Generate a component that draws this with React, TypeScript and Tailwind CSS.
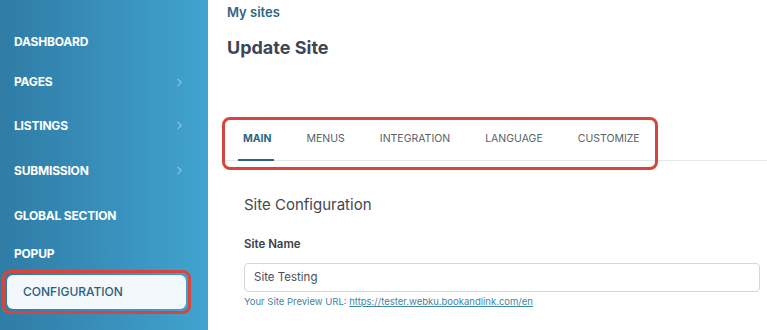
import { ChevronRight } from 'lucide-react'

const nav = [
  { label: 'DASHBOARD', h: 'h-[38px]' },
  { label: 'PAGES', h: 'h-[42px]', more: true },
  { label: 'LISTINGS', h: 'h-[45px]', more: true },
  { label: 'SUBMISSION', h: 'h-[45px]', more: true },
  { label: 'GLOBAL SECTION', h: 'h-[45px]' },
  { label: 'POPUP', h: 'h-[32px]' },
]

const tabs = ['MAIN', 'MENUS', 'INTEGRATION', 'LANGUAGE', 'CUSTOMIZE']

export default function App() {
  return (
    <div
      className="flex h-[330px] w-[767px] overflow-hidden bg-white"
      style={{ fontFamily: 'Inter, "Noto Sans", sans-serif' }}
    >
      {/* sidebar */}
      <aside className="flex w-[208px] shrink-0 flex-col bg-gradient-to-r from-[#2f7ca6] to-[#41a3cf] pt-[23px]">
        {nav.map((n) => (
          <div key={n.label} className={`flex ${n.h} items-center justify-between pl-[14px] pr-[22px]`}>
            <span className="text-[12px] font-bold tracking-[-0.2px] text-white">{n.label}</span>
            {n.more && <ChevronRight size={13} strokeWidth={1.5} className="text-white/80" />}
          </div>
        ))}
        <div className="ml-[2px] w-[189px] rounded-lg border-[3px] border-[#d8453c] p-[2px]">
          <div className="flex h-[34px] items-center rounded-md bg-[#f3f8fc] pl-[16px] text-[12px] font-medium text-[#2c5e7c]">
            CONFIGURATION
          </div>
        </div>
      </aside>

      {/* main */}
      <main className="flex flex-1 flex-col pl-[19px]">
        <div className="pt-[3px] text-[13px] font-semibold text-[#2b6584]">My sites</div>
        <h1 className="mt-[13px] text-[18px] font-bold leading-6 text-[#3c4656]">Update Site</h1>

        <div className="relative mt-[58px] ml-[-5px]">
          <div className="flex h-[43px] items-center border-b border-[#e5e7eb] pl-[21px]">
            {tabs.map((t, i) => (
              <div
                key={t}
                className={`relative flex h-full items-center mr-[35px] text-[10.5px] ${
                  i === 0 ? 'font-bold text-[#2b6584]' : 'text-[#5a5f66]'
                }`}
              >
                {t}
                {i === 0 && (
                  <span className="absolute bottom-[-1px] left-[-5px] right-[-2px] h-[2px] bg-[#2b6584]" />
                )}
              </div>
            ))}
          </div>
          <div className="pointer-events-none absolute left-0 top-[-1px] h-[53px] w-[436px] rounded-lg border-[3px] border-[#d8453c]" />
        </div>

        <div className="pl-[17px] pr-[7px]">
          <div className="mt-[33px] text-[15px] text-[#44484e]">Site Configuration</div>
          <div className="mt-[20px] text-[11.5px] font-semibold text-[#3d4148]">Site Name</div>
          <div className="mt-[10px] flex h-[29px] items-center rounded border border-[#d4d6da] pl-[9px] text-[11.5px] text-[#4a4e55]">
            Site Testing
          </div>
          <div className="mt-[3px] text-[9.5px] text-[#3f84a6]">
            Your Site Preview URL:{' '}
            <span className="underline">https://tester.webku.bookandlink.com/en</span>
          </div>
        </div>
      </main>
    </div>
  )
}
